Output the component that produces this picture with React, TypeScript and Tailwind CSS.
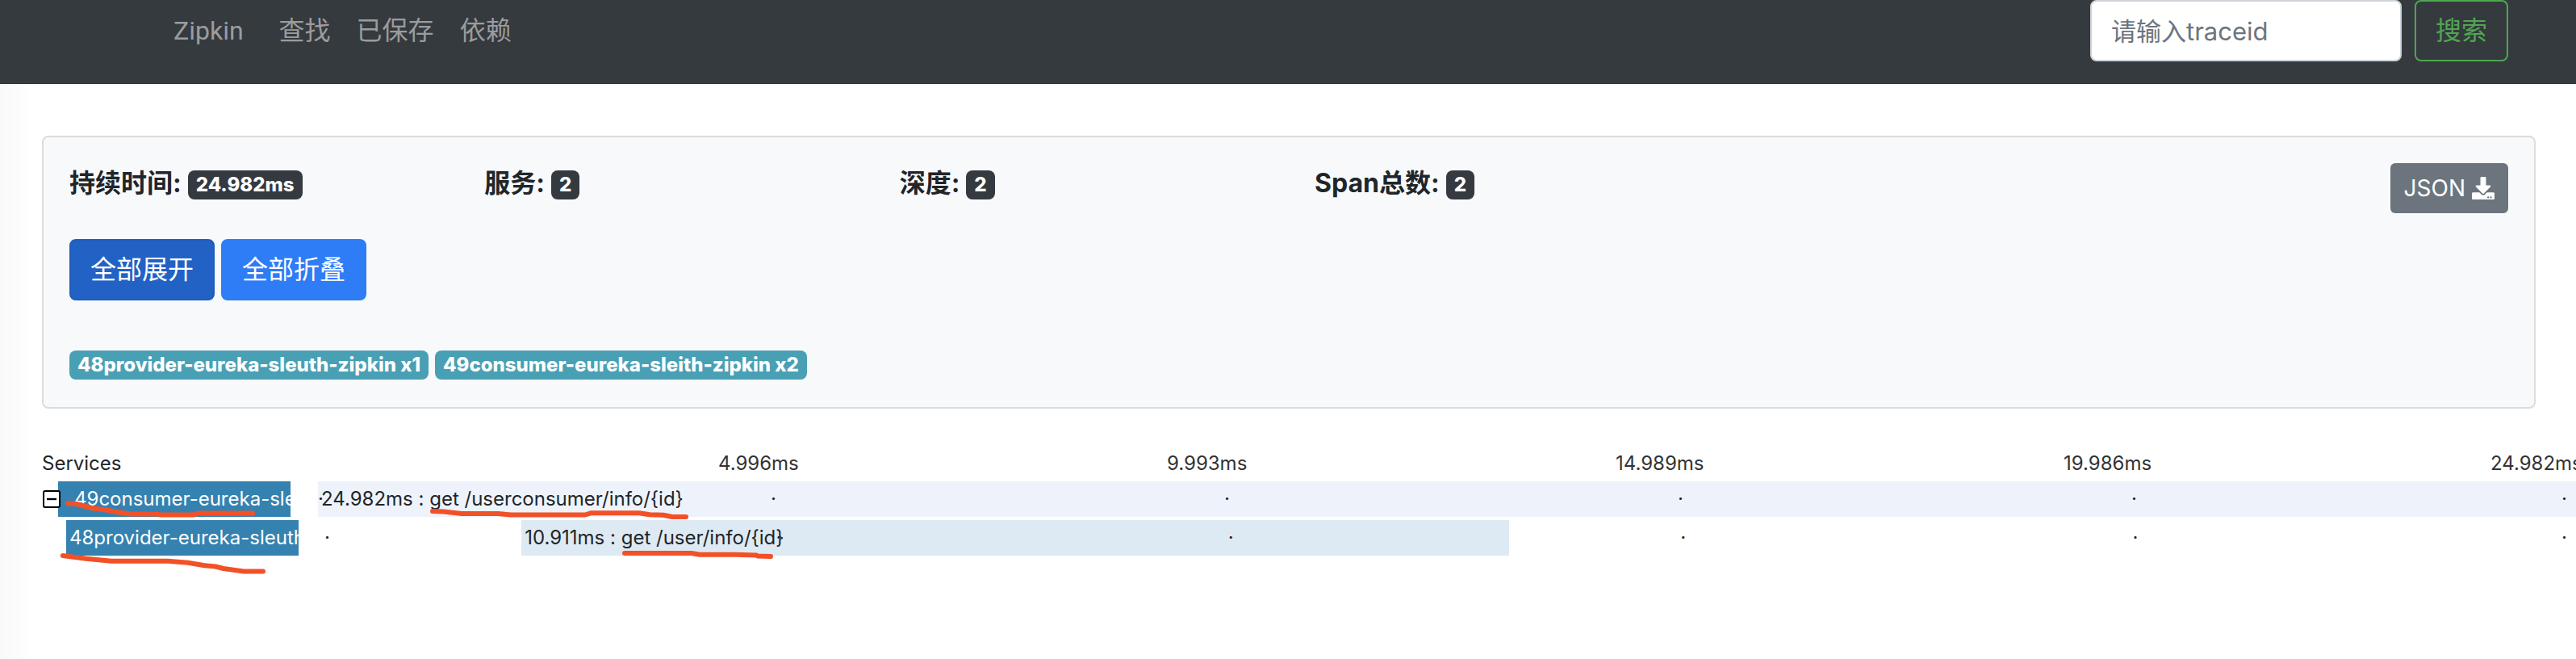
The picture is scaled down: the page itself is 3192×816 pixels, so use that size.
import { useState } from 'react';
import type { ReactNode } from 'react';
import { FaDownload } from 'react-icons/fa';

const summary = [
  { label: '持续时间', value: '24.982ms' },
  { label: '服务', value: '2' },
  { label: '深度', value: '2' },
  { label: 'Span总数', value: '2' },
];

const services = ['48provider-eureka-sleuth-zipkin x1', '49consumer-eureka-sleith-zipkin x2'];

const ticks = ['4.996ms', '9.993ms', '14.989ms', '19.986ms', '24.982ms'];

const strokes = [
  'M84 623.3L95 624L113 629L132 631.5L147 634.5L163 636.5L195 636.5L198 637.5L240 637.5L245 635.5L313 635.5',
  'M77.7 688L106.7 691.7L138 694.7L208 694.7L233 696.7L252 700L267 701.5L277 704L302 707.5L326 707.5',
  'M536 633L550 633.5L572 636L617 636L633 637.5L725 637.5L732 635.3L792 635.3L805 637.3L822 637.7L833 640L850 640',
  'M774 685L857 685L867 686.7L912 686.7L937 687.5L939 688.5L955 689',
];

function Badge({ className, children }: { className: string; children: ReactNode }) {
  return (
    <span
      className={`inline-flex h-9 items-center rounded-lg px-2.5 text-2xl leading-9 font-extrabold whitespace-nowrap text-white ${className}`}
    >
      {children}
    </span>
  );
}

function Timeline({ start, width, color, label }: { start: number; width: number; color: string; label: string }) {
  return (
    <div className="grid h-11 min-w-0 flex-1 leading-11">
      <div
        className={`col-start-1 row-start-1 pl-1 whitespace-nowrap ${color}`}
        style={{ marginLeft: `${start}%`, width: `${width}%` }}
      >
        {label}
      </div>
      <div className="col-start-1 row-start-1 grid grid-cols-[561fr_562fr_562fr_562fr_533fr_18fr]" aria-hidden="true">
        {[0, 1, 2, 3, 4, 5].map((i) => (
          <span key={i} className="min-w-0">
            ·
          </span>
        ))}
      </div>
    </div>
  );
}

export default function App() {
  const [open, setOpen] = useState(true);

  return (
    <div className="min-h-screen overflow-x-hidden bg-white bg-[linear-gradient(to_right,#f9f9f9,#ffffff_44px)] font-[Inter,'Noto_Sans_CJK_SC',sans-serif] text-[#212529]">
      <header className="flex items-center justify-between border-b border-[#32313a] bg-[#353a3e] pr-[84px] pb-[27px] pl-[215px]">
        <nav className="flex items-center text-[32px] leading-[48px] text-[#9a9c9e]">
          <a href="#home" className="mr-11 font-[Roboto,sans-serif]">
            Zipkin
          </a>
          <div className="flex gap-8">
            <a href="#find">查找</a>
            <a href="#saved">已保存</a>
            <a href="#dependency">依赖</a>
          </div>
        </nav>
        <form className="flex gap-4" onSubmit={(e) => e.preventDefault()}>
          <input
            type="text"
            aria-label="traceid"
            placeholder="请输入traceid"
            className="h-[76px] w-[386px] rounded-lg border-2 border-[#ced4da] bg-white px-6 text-[31px] placeholder:text-[#6c757d]"
          />
          <button
            type="submit"
            className="h-[76px] w-[116px] rounded-lg border-2 border-[#50a651] text-[32px] text-[#50a651]"
          >
            搜索
          </button>
        </form>
      </header>

      <main className="pt-16">
        <section className="mr-[50px] ml-[52px] rounded-lg border-2 border-[#dadcde] bg-[#f8f9fb] pt-8 pb-[34px]">
          <div className="grid grid-cols-6 items-start">
            {summary.map((item) => (
              <div key={item.label} className="flex items-center gap-2 pl-8 text-[32px] leading-[50px] font-bold whitespace-nowrap">
                <span>{item.label}:</span>
                <span className="flex pt-1">
                  <Badge className="bg-[#343a40]">{item.value}</Badge>
                </span>
              </div>
            ))}
            <div className="col-start-6 flex justify-end pr-8">
              <button className="flex h-[62px] items-center gap-2 rounded-md bg-[#6c757d] px-[17px] text-[28px] text-white">
                JSON
                <FaDownload />
              </button>
            </div>
          </div>
          <div className="mt-8 flex gap-2 pl-8 text-[32px] text-white">
            <button
              className="h-[76px] w-[180px] rounded-lg border-2 border-[#1f5cbc] bg-[#2262c5]"
              onClick={() => setOpen(true)}
            >
              全部展开
            </button>
            <button className="h-[76px] w-[180px] rounded-lg bg-[#2e7cf6]" onClick={() => setOpen(false)}>
              全部折叠
            </button>
          </div>
          <div className="mt-[62px] flex gap-2 pl-8">
            {services.map((name) => (
              <Badge key={name} className="bg-[#49a0b5]">
                {name}
              </Badge>
            ))}
          </div>
        </section>

        <section className="relative mt-[42px] pb-12 pl-[52px] text-2xl">
          <div className="grid h-12 grid-cols-[838fr_556fr_556fr_555fr_529fr_106fr] leading-[52px]">
            <span>Services</span>
            {ticks.map((t) => (
              <span key={t} className="min-w-0 whitespace-nowrap text-[#333333]">
                {t}
              </span>
            ))}
          </div>

          <div className="flex">
            <div className="flex w-[342px] shrink-0 items-center">
              <button
                aria-label={open ? '折叠' : '展开'}
                className="relative z-10 ml-px flex size-[22px] shrink-0 items-center justify-center rounded-[3px] border-2 border-black bg-white"
                onClick={() => setOpen(!open)}
              >
                <svg viewBox="0 0 18 18" className="size-[18px]" stroke="#000" strokeWidth="2.4">
                  <path d="M3 9H15" />
                  {!open && <path d="M9 3V15" />}
                </svg>
              </button>
              <div className="-ml-[3px] h-11 w-72 overflow-hidden bg-[#3582b1] pl-5 leading-11 whitespace-nowrap text-white">
                49consumer-eureka-sleith-zipkin
              </div>
            </div>
            <Timeline start={0} width={100} color="bg-[#eef3fb]" label="24.982ms : get /userconsumer/info/{id}" />
          </div>

          {open && (
            <div className="mt-1 flex pl-[30px]">
              <div className="w-80 shrink-0">
                <div className="h-11 w-72 overflow-hidden bg-[#3582b1] pl-1 leading-11 whitespace-nowrap text-white">
                  48provider-eureka-sleuth-zipkin
                </div>
              </div>
              <Timeline start={8.75} width={43.87} color="bg-[#deeaf3]" label="10.911ms : get /user/info/{id}" />
            </div>
          )}

          <svg
            viewBox="0 548 1060 180"
            className="pointer-events-none absolute top-0 left-0 z-20 h-[180px] w-[1060px]"
            fill="none"
            stroke="#f25127"
            strokeWidth="6"
            strokeLinecap="round"
            strokeLinejoin="round"
            aria-hidden="true"
          >
            {strokes.map((d) => (
              <path key={d} d={d} />
            ))}
          </svg>
        </section>
      </main>
    </div>
  );
}
